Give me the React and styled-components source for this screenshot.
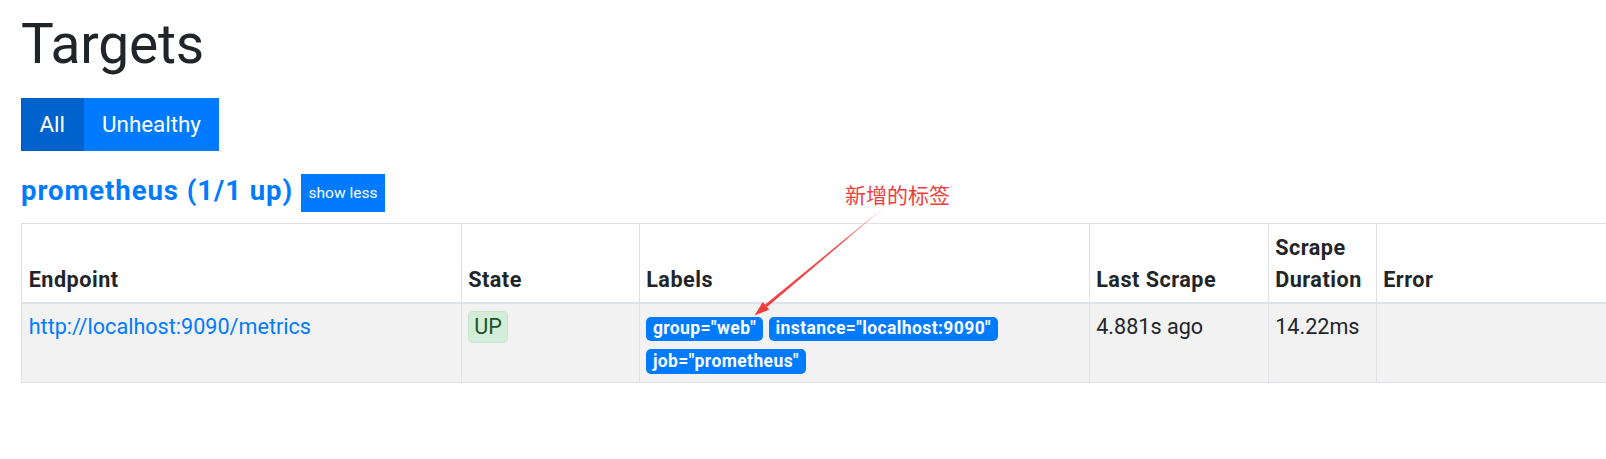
import React from 'react';
import styled, { createGlobalStyle } from 'styled-components';

const GlobalStyle = createGlobalStyle`
  html, body {
    margin: 0;
    padding: 0;
    background: #fff;
    overflow: hidden;
  }
  body {
    font-family: Roboto, "Liberation Sans", sans-serif;
    color: #212529;
  }
`;

const Page = styled.div`
  position: relative;
  width: 1606px;
  height: 459px;
  box-sizing: border-box;
  padding: 11px 0 0 21px;
  overflow: hidden;
`;

const Heading = styled.h1`
  margin: 0;
  font-size: 55px;
  font-weight: 400;
  line-height: 66px;
  letter-spacing: -0.2px;
  color: #212529;
`;

const ButtonGroup = styled.div`
  display: flex;
  margin-top: 21px;
`;

const FilterButton = styled.button`
  font-family: inherit;
  font-size: 22.4px;
  line-height: 33.6px;
  padding: 8.7px 17.5px;
  border: 1px solid ${({ $active }) => ($active ? '#005cbf' : '#007bff')};
  background: ${({ $active }) => ($active ? '#0062cc' : '#007bff')};
  color: #fff;
  border-radius: 0;
  cursor: pointer;
`;

const PoolHeader = styled.div`
  display: flex;
  align-items: center;
  gap: 8px;
  margin-top: 23px;
`;

const PoolTitle = styled.a`
  font-size: 27.5px;
  font-weight: 700;
  letter-spacing: 0.95px;
  line-height: 33px;
  color: #007bff;
  text-decoration: none;
  padding-bottom: 5px;
`;

const SmallButton = styled.button`
  font-family: inherit;
  font-size: 15.5px;
  line-height: 24px;
  padding: 6px 6.5px;
  border: 1px solid #007bff;
  background: #007bff;
  color: #fff;
  border-radius: 0;
`;

const Table = styled.table`
  margin-top: 11px;
  border-collapse: collapse;
  table-layout: fixed;
  width: 1614px;
  border: 1px solid #dee2e6;
  font-size: 21.6px;
  line-height: 32.4px;
`;

const Th = styled.th`
  padding: 8px 6.7px 5px;
  text-align: left;
  vertical-align: bottom;
  font-weight: 700;
  letter-spacing: 0.5px;
  color: #212529;
  border: 1px solid #dee2e6;
  border-bottom-width: 2px;
  background: #fff;
`;

const Td = styled.td`
  padding: 7.5px 6.7px 5.5px;
  vertical-align: top;
  border: 1px solid #dee2e6;
  background: #f2f2f2;
  color: #212529;
`;

const EndpointLink = styled.a`
  color: #007bff;
  text-decoration: none;
`;

const StateBadge = styled.span`
  display: inline-block;
  padding: 0 5px;
  line-height: 30px;
  border: 1px solid #c3e6cb;
  border-radius: 5px;
  background: #d4edda;
  color: #155724;
`;

const LabelBadge = styled.span`
  display: inline-block;
  margin-right: 6px;
  padding: 3.5px 6.7px;
  font-size: 17.5px;
  font-weight: 700;
  line-height: 1;
  letter-spacing: 0.4px;
  color: #fff;
  background: #007bff;
  border-radius: 5px;
`;

const Note = styled.div`
  position: absolute;
  top: 184px;
  left: 845px;
  font-family: "Noto Sans CJK SC", sans-serif;
  font-size: 21px;
  line-height: 1;
  color: #f23d3d;
  white-space: nowrap;
`;

const ArrowSvg = styled.svg`
  position: absolute;
  top: 200px;
  left: 740px;
  overflow: visible;
`;

const columns = [
  { title: 'Endpoint', width: 439.5 },
  { title: 'State', width: 178 },
  { title: 'Labels', width: 450 },
  { title: 'Last Scrape', width: 179 },
  { title: 'Scrape Duration', width: 108 },
  { title: 'Error', width: 260 },
];

const labels = ['group="web"', 'instance="localhost:9090"', 'job="prometheus"'];

const Arrow = () => (
  <ArrowSvg width="160" height="125" viewBox="0 0 160 125">
    <defs>
      <linearGradient id="fade" x1="142" y1="9" x2="26" y2="106" gradientUnits="userSpaceOnUse">
        <stop offset="0" stopColor="#f23d3d" stopOpacity="0.1" />
        <stop offset="0.35" stopColor="#f23d3d" stopOpacity="0.9" />
        <stop offset="1" stopColor="#f23d3d" stopOpacity="1" />
      </linearGradient>
    </defs>
    <polygon points="142.2,9.2 141.8,8.8 25,104.8 27,107.1" fill="url(#fade)" />
    <polygon points="14.5,115.5 29.2,109.7 22.8,102.1" fill="#f23d3d" />
  </ArrowSvg>
);

const App = () => (
  <Page>
    <GlobalStyle />
    <Heading>Targets</Heading>
    <ButtonGroup>
      <FilterButton $active>All</FilterButton>
      <FilterButton>Unhealthy</FilterButton>
    </ButtonGroup>
    <PoolHeader>
      <PoolTitle href="#prometheus">prometheus (1/1 up)</PoolTitle>
      <SmallButton>show less</SmallButton>
    </PoolHeader>
    <Table>
      <colgroup>
        {columns.map((c) => (
          <col key={c.title} style={{ width: `${c.width}px` }} />
        ))}
      </colgroup>
      <thead>
        <tr>
          {columns.map((c) => (
            <Th key={c.title}>{c.title}</Th>
          ))}
        </tr>
      </thead>
      <tbody>
        <tr>
          <Td>
            <EndpointLink href="#metrics">http://localhost:9090/metrics</EndpointLink>
          </Td>
          <Td>
            <StateBadge>UP</StateBadge>
          </Td>
          <Td>
            {labels.map((l) => (
              <LabelBadge key={l}>{l}</LabelBadge>
            ))}
          </Td>
          <Td>4.881s ago</Td>
          <Td>14.22ms</Td>
          <Td />
        </tr>
      </tbody>
    </Table>
    <Note>新增的标签</Note>
    <Arrow />
  </Page>
);

export default App;
